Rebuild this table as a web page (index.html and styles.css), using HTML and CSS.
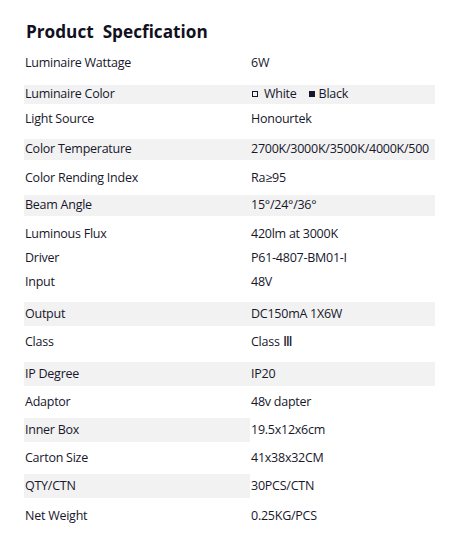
FILE: index.html
```html
<!DOCTYPE html>
<html>
<head>
<meta charset="utf-8">
<link rel="stylesheet" href="styles.css">
</head>
<body>
<div class="sheet">
  <h1 class="title">Product&nbsp; Specfication</h1>
  <div class="spec">
    <div class="row r1"><div class="k">Luminaire Wattage</div><div class="v">6W</div></div>
    <div class="row r2 shade"><div class="k">Luminaire Color</div><div class="v"><span class="box"></span>White<span class="box fill"></span>Black</div></div>
    <div class="row r3"><div class="k">Light Source</div><div class="v">Honourtek</div></div>
    <div class="row r4 shade"><div class="k">Color Temperature</div><div class="v">2700K/3000K/3500K/4000K/500</div></div>
    <div class="row r5"><div class="k">Color Rending Index</div><div class="v">Ra≥95</div></div>
    <div class="row r4 shade"><div class="k">Beam Angle</div><div class="v">15°/24°/36°</div></div>
    <div class="row r7"><div class="k">Luminous Flux</div><div class="v">420lm at 3000K</div></div>
    <div class="row r8"><div class="k">Driver</div><div class="v">P61-4807-BM01-I</div></div>
    <div class="row r9"><div class="k">Input</div><div class="v">48V</div></div>
    <div class="row r8 shade"><div class="k">Output</div><div class="v">DC150mA 1X6W</div></div>
    <div class="row r11"><div class="k">Class</div><div class="v">Class <span class="roman">Ⅲ</span></div></div>
    <div class="row r8 shade"><div class="k">IP Degree</div><div class="v">IP20</div></div>
    <div class="row r13"><div class="k">Adaptor</div><div class="v">48v dapter</div></div>
    <div class="row r8 half"><div class="k">Inner Box</div><div class="v">19.5x12x6cm</div></div>
    <div class="row r13"><div class="k">Carton Size</div><div class="v">41x38x32CM</div></div>
    <div class="row r8 half"><div class="k">QTY/CTN</div><div class="v">30PCS/CTN</div></div>
    <div class="row r17"><div class="k">Net Weight</div><div class="v">0.25KG/PCS</div></div>
  </div>
</div>
</body>
</html>
```
FILE: styles.css
```css
* { box-sizing: border-box; }
html, body { margin: 0; padding: 0; background: #fff; }
body {
  font-family: "Open Sans", "Noto Sans", sans-serif;
  color: #17172c;
}
.sheet {
  width: 471px;
  padding: 20px 0 0 24px;
}
.title {
  margin: 0 0 0 2px;
  font-size: 17.2px;
  line-height: 24px;
  font-weight: 700;
  color: #111122;
  height: 25px;
}
.spec {
  width: 411px;
  font-size: 12.5px;
  line-height: 18px;
  letter-spacing: -0.25px;
}
.row {
  display: grid;
  grid-template-columns: 226px 185px;
}
.k { padding-left: 1px; }
.v { padding-left: 1px; white-space: nowrap; }
.shade { background: #f2f2f2; }
.half .k { background: #f2f2f2; }
.r1 { height: 40px; padding-top: 9px; }
.r2 { height: 19px; padding-top: 0; }
.r3 { height: 35px; padding-top: 6px; }
.r4 { height: 21px; padding-top: 1px; }
.r5 { height: 35px; padding-top: 9px; }
.r7 { height: 30px; padding-top: 9px; }
.r8 { height: 24px; padding-top: 3px; }
.r9 { height: 32px; padding-top: 3px; }
.r11 { height: 36px; padding-top: 7px; }
.r13 { height: 32px; padding-top: 7px; }
.r17 { height: 36px; padding-top: 9px; }
.half { padding-top: 0; }
.half .k, .half .v { padding-top: 3px; }
.roman {
  font-family: "Liberation Serif", serif;
  font-size: 14px;
  letter-spacing: 0;
}
.box {
  display: inline-block;
  width: 6px;
  height: 6px;
  border: 1px solid #17172c;
  margin: 0 6px 1px 1px;
  vertical-align: middle;
}
.box.fill {
  background: #17172c;
  margin-left: 12px;
  margin-right: 4px;
}
```
